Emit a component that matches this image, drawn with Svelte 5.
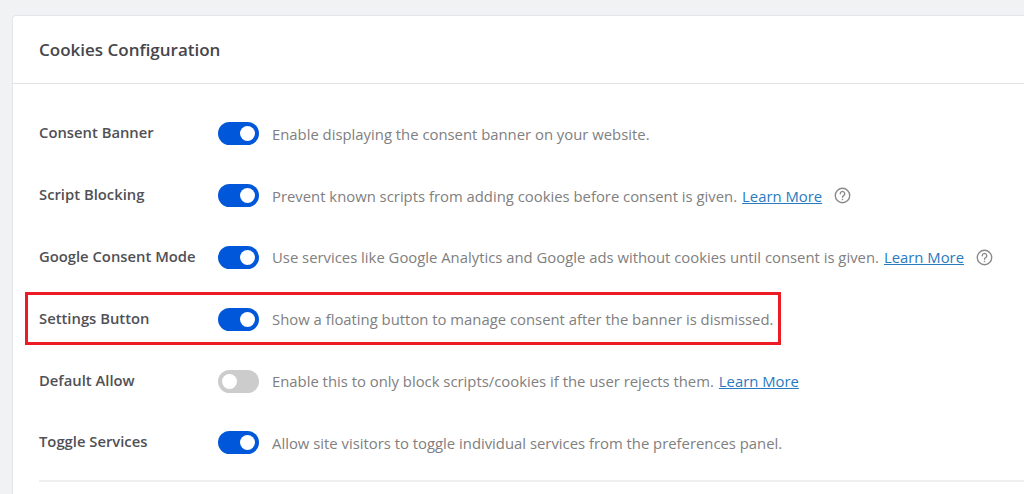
<script>
  const rows = [
    { label: 'Consent Banner', on: true, text: 'Enable displaying the consent banner on your website.' },
    { label: 'Script Blocking', on: true, text: 'Prevent known scripts from adding cookies before consent is given.', link: true, help: true },
    { label: 'Google Consent Mode', on: true, text: 'Use services like Google Analytics and Google ads without cookies until consent is given.', link: true, help: true },
    { label: 'Settings Button', on: true, text: 'Show a floating button to manage consent after the banner is dismissed.', marked: true },
    { label: 'Default Allow', on: false, text: 'Enable this to only block scripts/cookies if the user rejects them.', link: true },
    { label: 'Toggle Services', on: true, text: 'Allow site visitors to toggle individual services from the preferences panel.' }
  ];
</script>

<div class="page">
  <div class="card">
    <div class="card-header">Cookies Configuration</div>
    <div class="card-body">
      {#each rows as row}
        <div class="row">
          {#if row.marked}<span class="marker"></span>{/if}
          <span class="label">{row.label}</span>
          <span class="switch" class:on={row.on}><span class="knob"></span></span>
          <span class="desc">{row.text}</span>
          {#if row.link}<a class="more" href="#more">Learn More</a>{/if}
          {#if row.help}
            <svg class="help" viewBox="0 0 16 16" width="17" height="17" fill="none" stroke="#8a8a8a" stroke-width="1.3">
              <circle cx="8" cy="8" r="6.8" />
              <path d="M5.9 6.3a2.1 2.1 0 1 1 3.2 1.8c-.8.4-1.1.8-1.1 1.6" stroke-linecap="round" />
              <circle cx="8" cy="11.7" r=".5" fill="#8a8a8a" stroke-width=".5" />
            </svg>
          {/if}
        </div>
      {/each}
      <div class="divider"></div>
    </div>
  </div>
</div>

<style>
  :global(body) {
    background: #f1f2f4;
    overflow: hidden;
  }
  .page {
    height: 494px;
    padding: 15px 0 0 12px;
    box-sizing: border-box;
    overflow: hidden;
    font-family: "Open Sans", "Noto Sans", sans-serif;
  }
  .card {
    background: #fff;
    border: 1px solid #e4e5e8;
    border-right: none;
    border-radius: 4px 0 0 0;
    height: 600px;
  }
  .card-header {
    height: 67px;
    line-height: 68px;
    padding-left: 26px;
    border-bottom: 1px solid #e2e3e6;
    font-size: 17px;
    font-weight: 600;
    color: #46464b;
  }
  .card-body {
    padding: 19px 0 0 26px;
  }
  .row {
    position: relative;
    display: flex;
    align-items: center;
    height: 61.8px;
    white-space: nowrap;
  }
  .label {
    width: 179px;
    flex: none;
    margin-top: -3px;
    font-size: 14.8px;
    font-weight: 600;
    color: #505055;
  }
  .switch {
    flex: none;
    box-sizing: border-box;
    display: flex;
    align-items: center;
    width: 41px;
    height: 23px;
    padding: 0 4px;
    border-radius: 12px;
    background: #cccccc;
  }
  .switch.on {
    justify-content: flex-end;
    background: #0057d9;
  }
  .knob {
    width: 15px;
    height: 15px;
    border-radius: 50%;
    background: #fff;
  }
  .desc {
    margin-left: 13px;
    font-size: 14.85px;
    color: #808080;
  }
  .more {
    margin-left: 5px;
    font-size: 14.85px;
    color: #2a7abf;
    text-decoration: underline;
  }
  .help {
    margin-left: 12px;
    flex: none;
  }
  .marker {
    position: absolute;
    left: -14px;
    top: 4px;
    width: 750px;
    height: 47px;
    border: 3px solid #ed1c24;
    pointer-events: none;
  }
  .divider {
    margin-top: 6px;
    height: 2px;
    background: #eeeff1;
  }
</style>
